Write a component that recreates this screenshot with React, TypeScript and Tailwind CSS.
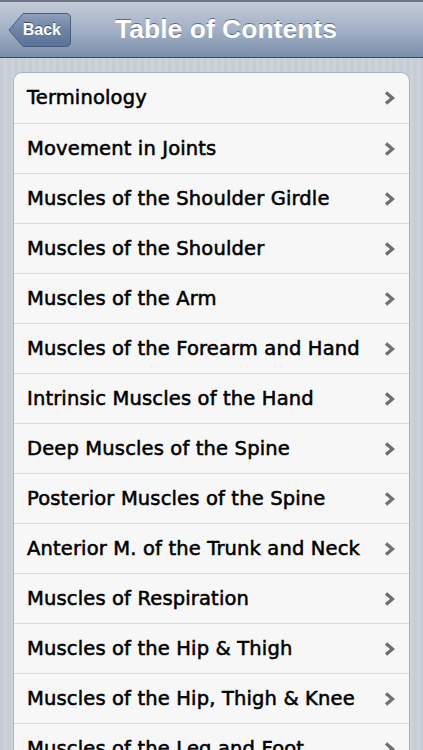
const items = [
  "Terminology",
  "Movement in Joints",
  "Muscles of the Shoulder Girdle",
  "Muscles of the Shoulder",
  "Muscles of the Arm",
  "Muscles of the Forearm and Hand",
  "Intrinsic Muscles of the Hand",
  "Deep Muscles of the Spine",
  "Posterior Muscles of the Spine",
  "Anterior M. of the Trunk and Neck",
  "Muscles of Respiration",
  "Muscles of the Hip & Thigh",
  "Muscles of the Hip, Thigh & Knee",
  "Muscles of the Leg and Foot",
]

function Chevron() {
  return (
    <svg width="12" height="16" viewBox="0 0 12 16" className="shrink-0">
      <path d="M3 2.5 L9.5 8 L3 13.5" fill="none" stroke="#707070" strokeWidth="3.4" strokeLinejoin="miter" />
    </svg>
  )
}

function BackButton() {
  return (
    <div className="relative w-[64px] h-[36px] ml-[8px] flex items-center justify-end">
      <svg width="64" height="36" viewBox="0 0 64 36" className="absolute inset-0">
        <defs>
          <linearGradient id="bb" x1="0" y1="0" x2="0" y2="1">
            <stop offset="0" stopColor="#8ea0bb" />
            <stop offset="0.5" stopColor="#6d84a6" />
            <stop offset="1" stopColor="#5a7299" />
          </linearGradient>
        </defs>
        <path
          d="M1 18 L15 1.5 H58 Q62.5 1.5 62.5 6 V30 Q62.5 34.5 58 34.5 H15 Z"
          fill="url(#bb)"
          stroke="#4a5d7c"
          strokeWidth="1"
        />
      </svg>
      <span className="relative pr-[11px] text-white font-bold text-[16px] [text-shadow:0_-1px_0_rgba(0,0,0,0.45)] font-['Liberation_Sans',Arial,sans-serif]">
        Back
      </span>
    </div>
  )
}

export default function App() {
  return (
    <div className="w-[423px] h-[750px] overflow-hidden bg-[repeating-linear-gradient(90deg,#c6cdd6_0px,#c6cdd6_4px,#ccd3db_4px,#ccd3db_7px)]">
      <div className="h-[58px] border-t-[2px] border-[#6b7686] border-b border-b-[#3c4858] bg-gradient-to-b from-[#c3cbd8] via-[#a3b1c6] to-[#7b8eab] flex items-center relative">
        <BackButton />
        <div className="absolute inset-x-0 top-0 bottom-0 flex items-center justify-center pl-[29px] pointer-events-none">
          <h1 className="text-white font-bold text-[26.5px] [text-shadow:0_-1px_0_rgba(40,50,70,0.6)] font-['Liberation_Sans',Arial,sans-serif]">
            Table of Contents
          </h1>
        </div>
      </div>
      <div className="px-[13px] pt-[14px]">
        <div className="bg-[#f7f7f7] rounded-[9px] border border-[#aab2bd] overflow-hidden">
          {items.map((t, i) => (
            <div
              key={t}
              className={
                "h-[50px] flex items-center justify-between pl-[13px] pr-[14px] " +
                (i > 0 ? "border-t border-[#d9d9d9]" : "")
              }
            >
              <span className="text-black text-[19.5px] tracking-[0.15px] [-webkit-text-stroke:0.55px_black] font-['DejaVu_Sans',sans-serif]">
                {t}
              </span>
              <Chevron />
            </div>
          ))}
        </div>
      </div>
    </div>
  )
}
